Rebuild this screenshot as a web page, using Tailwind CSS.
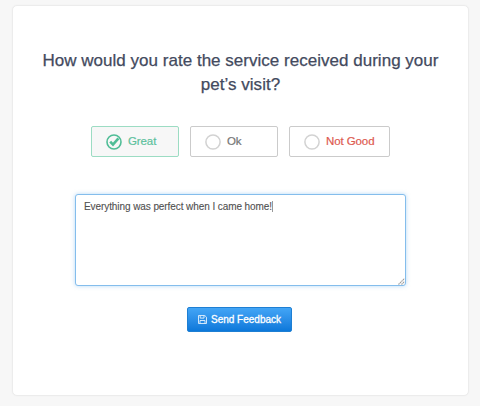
<!DOCTYPE html>
<html lang="en">

<head>
    <meta charset="UTF-8">
    <meta name="viewport" content="width=device-width, initial-scale=1.0">
    <title>Rate your visit</title>
    <script src="https://cdn.jsdelivr.net/npm/@tailwindcss/browser@4"></script>
</head>

<body class="bg-[#f7f7f7] h-screen overflow-hidden px-3 pt-[5px] font-['Liberation_Sans',Arial,sans-serif]">
    <form id="feedbackForm"
        class="flex flex-col items-center w-[457px] h-[391px] bg-white border border-[#ececec] rounded-[5px] shadow-[0_0_2px_rgba(0,0,0,0.04)] pt-[43px]">
        <h1 class="text-[17px] leading-6 tracking-[0.02px] text-[#434a5e] text-center whitespace-nowrap [-webkit-text-stroke:0.25px_#434a5e]">
            How would you rate the service received during your<br>pet’s visit?
        </h1>

        <!-- Rating options -->
        <div class="flex gap-[11px] mt-[29px] text-[11.5px] tracking-[-0.1px] [-webkit-text-stroke:0.2px_currentColor]">
            <button type="button"
                class="flex items-center w-[88px] h-[31px] pl-[14px] gap-[6px] bg-[#f7f7f7] border border-[#9cdcc3] rounded-[2px] text-[#5dc19d]">
                <svg class="size-4 shrink-0" viewBox="0 0 16 16" fill="none" stroke="#4fbd96">
                    <circle cx="8" cy="8" r="7" stroke-width="1.6" />
                    <path d="M4.2 7.6l2.8 3 5.4-6.2" stroke-width="2.6" />
                </svg>
                Great
            </button>
            <button type="button"
                class="flex items-center w-[88px] h-[31px] pl-[14px] gap-[6px] bg-white border border-[#cbcbcb] rounded-[2px] text-[#757575]">
                <svg class="size-4 shrink-0" viewBox="0 0 16 16" fill="none" stroke="#d2d2d2">
                    <circle cx="8" cy="8" r="7.1" stroke-width="1.5" />
                </svg>
                Ok
            </button>
            <button type="button"
                class="flex items-center w-[101px] h-[31px] pl-[14px] gap-[6px] bg-white border border-[#cbcbcb] rounded-[2px] text-[#dd5a50] whitespace-nowrap">
                <svg class="size-4 shrink-0" viewBox="0 0 16 16" fill="none" stroke="#d2d2d2">
                    <circle cx="8" cy="8" r="7.1" stroke-width="1.5" />
                </svg>
                Not Good
            </button>
        </div>

        <!-- Comment box -->
        <div
            class="relative flex w-[331px] h-[92px] mt-[37px] pt-[6px] pl-2 bg-white border border-[#84bdec] rounded-[3px] shadow-[0_0_4px_rgba(110,180,240,0.5)]">
            <p class="text-[10px] leading-3 tracking-[-0.08px] text-[#505050] whitespace-nowrap [-webkit-text-stroke:0.1px_#505050]">Everything was perfect when I came home!</p>
            <span class="w-px h-[11px] bg-[#999]"></span>
            <svg class="absolute right-0 bottom-0 size-[7px]" viewBox="0 0 7 7" stroke="#999" stroke-width="1.1">
                <path d="M0.5 6.5l6-6M3.5 6.5l3-3" stroke-dasharray="1.5 0.6" />
            </svg>
        </div>

        <button type="submit"
            class="flex items-center justify-center gap-1 w-[105px] h-[25px] mt-[21px] mr-[2px] bg-linear-to-b from-[#42a5f6] to-[#0b78da] border border-[#1e7fd3] rounded-[2px] text-[10px] text-white whitespace-nowrap [-webkit-text-stroke:0.3px_#fff]">
            <svg class="size-[9px] shrink-0" viewBox="0 0 9 9" fill="none" stroke="#e3f1fd" stroke-width="0.9">
                <path d="M0.5 0.5h6.3l1.7 1.7v6.3h-8zM2.2 0.5v2.6h3.8v-2.6M2 8.5v-3h5v3" />
            </svg>
            Send Feedback
        </button>
    </form>
</body>

</html>
